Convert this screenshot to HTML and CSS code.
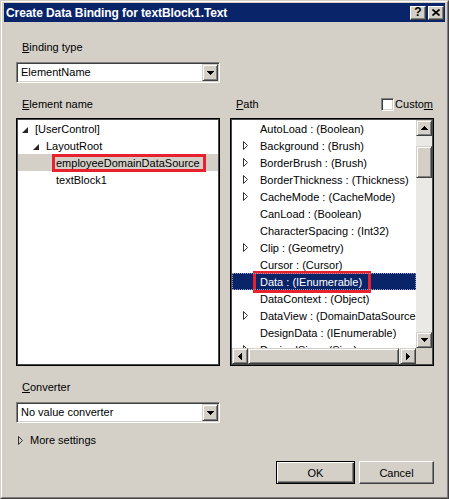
FILE: index.html
```html
<!DOCTYPE html>
<html>
<head>
<meta charset="utf-8">
<link rel="stylesheet" href="styles.css">
</head>
<body>
<div class="window">
 <div class="frame">
  <div class="titlebar">
   <span class="title">Create Data Binding for textBlock1.Text</span>
   <div class="tbtns">
    <span class="tbtn tbtn-help">?</span>
    <span class="tbtn"><svg width="8" height="7" viewBox="0 0 8 7"><path d="M0.5 0.5 L7.5 6.5 M7.5 0.5 L0.5 6.5" stroke="#000" stroke-width="1.7" fill="none"/></svg></span>
   </div>
  </div>
  <div class="content">
   <div class="label lbl-first"><u>B</u>inding type</div>
   <div class="combo">
    <span class="combo-text">ElementName</span>
    <span class="combo-btn"><svg width="7" height="4" viewBox="0 0 7 4" shape-rendering="crispEdges"><rect x="0" y="0" width="7" height="1"/><rect x="1" y="1" width="5" height="1"/><rect x="2" y="2" width="3" height="1"/><rect x="3" y="3" width="1" height="1"/></svg></span>
   </div>

   <div class="columns">
    <div class="col">
     <div class="label"><u>E</u>lement name</div>
     <div class="listbox tree">
      <div class="trow lvl0"><span class="exp"><svg width="6" height="6" viewBox="0 0 6 6"><polygon points="6,0 6,6 0,6" fill="#262626"/></svg></span><span>[UserControl]</span></div>
      <div class="trow lvl1"><span class="exp"><svg width="6" height="6" viewBox="0 0 6 6"><polygon points="6,0 6,6 0,6" fill="#262626"/></svg></span><span>LayoutRoot</span></div>
      <div class="trow lvl2 tsel"><span class="exp"></span><span class="mark mark-left">employeeDomainDataSource</span></div>
      <div class="trow lvl2"><span class="exp"></span><span>textBlock1</span></div>
     </div>
    </div>
    <div class="col">
     <div class="label pathhead">
      <span><u>P</u>ath</span>
      <span class="check"><span class="cbox"></span><span>Custo<u>m</u></span></span>
     </div>
     <div class="listbox pathbox">
      <div class="items">
       <div class="prow"><span class="pexp"></span><span>AutoLoad : (Boolean)</span></div>
       <div class="prow"><span class="pexp"><svg width="6" height="9" viewBox="0 0 6 9"><polygon points="0.5,0.5 4.5,4.5 0.5,8.5" fill="#fff" stroke="#333" stroke-width="1"/></svg></span><span>Background : (Brush)</span></div>
       <div class="prow"><span class="pexp"><svg width="6" height="9" viewBox="0 0 6 9"><polygon points="0.5,0.5 4.5,4.5 0.5,8.5" fill="#fff" stroke="#333" stroke-width="1"/></svg></span><span>BorderBrush : (Brush)</span></div>
       <div class="prow"><span class="pexp"><svg width="6" height="9" viewBox="0 0 6 9"><polygon points="0.5,0.5 4.5,4.5 0.5,8.5" fill="#fff" stroke="#333" stroke-width="1"/></svg></span><span>BorderThickness : (Thickness)</span></div>
       <div class="prow"><span class="pexp"><svg width="6" height="9" viewBox="0 0 6 9"><polygon points="0.5,0.5 4.5,4.5 0.5,8.5" fill="#fff" stroke="#333" stroke-width="1"/></svg></span><span>CacheMode : (CacheMode)</span></div>
       <div class="prow"><span class="pexp"></span><span>CanLoad : (Boolean)</span></div>
       <div class="prow"><span class="pexp"></span><span>CharacterSpacing : (Int32)</span></div>
       <div class="prow"><span class="pexp"><svg width="6" height="9" viewBox="0 0 6 9"><polygon points="0.5,0.5 4.5,4.5 0.5,8.5" fill="#fff" stroke="#333" stroke-width="1"/></svg></span><span>Clip : (Geometry)</span></div>
       <div class="prow"><span class="pexp"></span><span>Cursor : (Cursor)</span></div>
       <div class="prow psel"><span class="pexp"></span><span class="mark mark-right">Data : (IEnumerable)</span></div>
       <div class="prow"><span class="pexp"></span><span>DataContext : (Object)</span></div>
       <div class="prow"><span class="pexp"><svg width="6" height="9" viewBox="0 0 6 9"><polygon points="0.5,0.5 4.5,4.5 0.5,8.5" fill="#fff" stroke="#333" stroke-width="1"/></svg></span><span>DataView : (DomainDataSourceView)</span></div>
       <div class="prow"><span class="pexp"></span><span>DesignData : (IEnumerable)</span></div>
       <div class="prow"><span class="pexp"><svg width="6" height="9" viewBox="0 0 6 9"><polygon points="0.5,0.5 4.5,4.5 0.5,8.5" fill="#fff" stroke="#333" stroke-width="1"/></svg></span><span>DesiredSize : (Size)</span></div>
      </div>
      <div class="vscroll">
       <span class="sbtn"><svg width="7" height="4" viewBox="0 0 7 4" shape-rendering="crispEdges"><rect x="3" y="0" width="1" height="1"/><rect x="2" y="1" width="3" height="1"/><rect x="1" y="2" width="5" height="1"/><rect x="0" y="3" width="7" height="1"/></svg></span>
       <div class="vtrack"><div class="vthumb"></div></div>
       <span class="sbtn"><svg width="7" height="4" viewBox="0 0 7 4" shape-rendering="crispEdges"><rect x="0" y="0" width="7" height="1"/><rect x="1" y="1" width="5" height="1"/><rect x="2" y="2" width="3" height="1"/><rect x="3" y="3" width="1" height="1"/></svg></span>
      </div>
      <div class="hscroll">
       <span class="sbtn"><svg width="4" height="7" viewBox="0 0 4 7" shape-rendering="crispEdges"><rect x="0" y="3" width="1" height="1"/><rect x="1" y="2" width="1" height="3"/><rect x="2" y="1" width="1" height="5"/><rect x="3" y="0" width="1" height="7"/></svg></span>
       <div class="htrack"><div class="hthumb"></div></div>
       <span class="sbtn"><svg width="4" height="7" viewBox="0 0 4 7" shape-rendering="crispEdges"><rect x="0" y="0" width="1" height="7"/><rect x="1" y="1" width="1" height="5"/><rect x="2" y="2" width="1" height="3"/><rect x="3" y="3" width="1" height="1"/></svg></span>
      </div>
      <div class="corner"></div>
     </div>
    </div>
   </div>

   <div class="label lbl-conv"><u>C</u>onverter</div>
   <div class="combo">
    <span class="combo-text">No value converter</span>
    <span class="combo-btn"><svg width="7" height="4" viewBox="0 0 7 4" shape-rendering="crispEdges"><rect x="0" y="0" width="7" height="1"/><rect x="1" y="1" width="5" height="1"/><rect x="2" y="2" width="3" height="1"/><rect x="3" y="3" width="1" height="1"/></svg></span>
   </div>

   <div class="more">
    <span class="more-exp"><svg width="6" height="9" viewBox="0 0 6 9"><polygon points="0.5,0.5 4.5,4.5 0.5,8.5" fill="#d4d0c8" stroke="#333" stroke-width="1"/></svg></span>
    <span>More settings</span>
   </div>

   <div class="buttons">
    <span class="btn btn-default">OK</span>
    <span class="btn">Cancel</span>
   </div>
  </div>
 </div>
</div>
</body>
</html>
```

FILE: styles.css
```css
* { box-sizing: border-box; }

body {
  margin: 0;
  font-family: "Liberation Sans", Arial, sans-serif;
  font-size: 11px;
  color: #000;
}

.window {
  width: 449px;
  height: 499px;
  background: #d4d0c8;
  border: 1px solid;
  border-color: #d4d0c8 #404040 #404040 #d4d0c8;
}

.frame {
  height: 100%;
  border: 1px solid;
  border-color: #fff #808080 #808080 #fff;
  padding: 1px 2px 2px 2px;
  display: flex;
  flex-direction: column;
}

.titlebar {
  height: 19px;
  background: #0a246a;
  display: flex;
  align-items: center;
  justify-content: space-between;
  padding: 0 1px 0 2px;
  flex: none;
}

.title {
  color: #fff;
  font-weight: bold;
  font-size: 12px;
  line-height: 14px;
  letter-spacing: -0.1px;
}

.tbtns {
  display: flex;
  gap: 2px;
}

.tbtn {
  width: 16px;
  height: 14px;
  background: #d4d0c8;
  border: 1px solid;
  border-color: #fff #404040 #404040 #fff;
  box-shadow: inset -1px -1px #808080;
  display: flex;
  align-items: center;
  justify-content: center;
  font-weight: bold;
  font-size: 12px;
  line-height: 12px;
  padding-bottom: 1px;
}

.content {
  flex: 1;
  display: flex;
  flex-direction: column;
  padding: 0 11px 0 12px;
}

.label {
  line-height: 14px;
  height: 14px;
  padding-left: 6px;
  white-space: nowrap;
}

.lbl-first { margin-top: 18px; }
.lbl-conv { margin-top: 14px; }

.combo {
  margin-top: 8px;
  width: 204px;
  height: 21px;
  background: #fff;
  border: 1px solid;
  border-color: #808080 #fff #fff #808080;
  box-shadow: inset 1px 1px #404040, inset -1px -1px #d4d0c8;
  padding: 1px;
  display: flex;
  align-items: stretch;
}

.combo-text {
  flex: 1;
  padding-left: 3px;
  line-height: 17px;
}

.combo-btn {
  width: 16px;
  background: #d4d0c8;
  border: 1px solid;
  border-color: #d4d0c8 #404040 #404040 #d4d0c8;
  box-shadow: inset 1px 1px #fff, inset -1px -1px #808080;
  display: flex;
  align-items: center;
  justify-content: center;
}

.columns {
  margin-top: 14px;
  display: flex;
  gap: 10px;
}

.col {
  width: 204px;
  display: flex;
  flex-direction: column;
}

.listbox {
  margin-top: 7px;
  height: 248px;
  background: #fff;
  border: 1px solid #000;
  box-shadow: inset 0 0 0 1px #4a4a4a;
  padding: 1px;
}

.trow {
  height: 17px;
  display: flex;
  align-items: center;
  white-space: nowrap;
}

.trow .exp {
  width: 13px;
  height: 17px;
  display: flex;
  align-items: center;
  padding-top: 2px;
  flex: none;
}

.lvl0 { padding-left: 4px; }
.lvl1 { padding-left: 15px; }
.lvl2 { padding-left: 25px; }

.tsel { background: #d4d0c8; }

.mark {
  display: inline-block;
  border: 3px solid #e8212e;
}

.mark-left {
  line-height: 12px;
  margin-left: -4px;
  padding: 0 3px 0 1px;
}

.pathhead {
  display: flex;
  justify-content: space-between;
  align-items: center;
  padding-right: 1px;
}

.check {
  display: flex;
  align-items: center;
  gap: 1px;
}

.cbox {
  width: 13px;
  height: 13px;
  background: #fff;
  border: 1px solid;
  border-color: #808080 #fff #fff #808080;
  box-shadow: inset 1px 1px #404040, inset -1px -1px #d4d0c8;
}

.pathbox {
  display: grid;
  grid-template-columns: 1fr 16px;
  grid-template-rows: 1fr 16px;
}

.items {
  overflow: hidden;
  min-width: 0;
}

.prow {
  height: 17px;
  display: flex;
  align-items: center;
  padding-left: 11px;
  white-space: nowrap;
}

.pexp {
  width: 17px;
  flex: none;
  display: flex;
  align-items: center;
}

.psel {
  background: #0a246a;
  color: #fff;
  outline: 1px dotted #9aa3c4;
  outline-offset: -1px;
}

.mark-right {
  line-height: 14px;
  margin-left: -7px;
  padding: 1px 6px 1px 4px;
}

.sbtn {
  width: 16px;
  height: 16px;
  flex: none;
  background: #d4d0c8;
  border: 1px solid;
  border-color: #d4d0c8 #404040 #404040 #d4d0c8;
  box-shadow: inset 1px 1px #fff, inset -1px -1px #808080;
  display: flex;
  align-items: center;
  justify-content: center;
}

.vscroll {
  display: flex;
  flex-direction: column;
}

.vtrack {
  flex: 1;
  background: #ebe9e5;
}

.vthumb {
  margin-top: 10px;
  height: 32px;
  background: #d4d0c8;
  border: 1px solid;
  border-color: #d4d0c8 #404040 #404040 #d4d0c8;
  box-shadow: inset 1px 1px #fff, inset -1px -1px #808080;
}

.hscroll {
  display: flex;
}

.htrack {
  flex: 1;
  background: #ebe9e5;
  display: flex;
}

.hthumb {
  flex: 1;
  margin-right: 1px;
  background: #d4d0c8;
  border: 1px solid;
  border-color: #d4d0c8 #404040 #404040 #d4d0c8;
  box-shadow: inset 1px 1px #fff, inset -1px -1px #808080;
}

.corner {
  background: #d4d0c8;
}

.more {
  margin-top: 10px;
  height: 14px;
  display: flex;
  align-items: center;
  padding-left: 2px;
}

.more-exp {
  width: 12px;
  display: flex;
  align-items: center;
}

.buttons {
  margin-top: 14px;
  display: flex;
  justify-content: flex-end;
  gap: 4px;
}

.btn {
  height: 23px;
  width: 75px;
  background: #d4d0c8;
  border: 1px solid;
  border-color: #fff #404040 #404040 #fff;
  box-shadow: inset -1px -1px #808080;
  display: flex;
  align-items: center;
  justify-content: center;
}

.btn-default {
  width: 79px;
  border: 1px solid #000;
  box-shadow: inset 1px 1px #fff, inset -1px -1px #404040, inset -2px -2px #808080;
}
```
